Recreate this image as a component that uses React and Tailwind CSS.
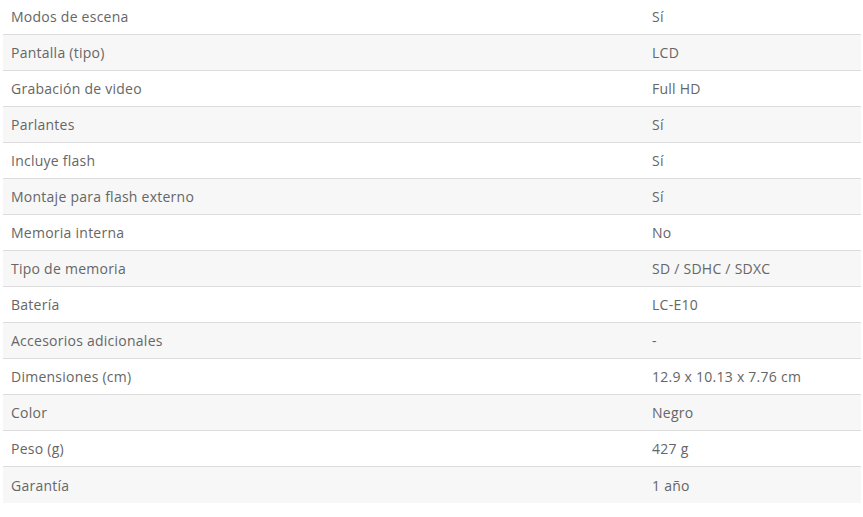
import React from 'react';

const specs = [
  ['Modos de escena', 'Sí'],
  ['Pantalla (tipo)', 'LCD'],
  ['Grabación de video', 'Full HD'],
  ['Parlantes', 'Sí'],
  ['Incluye flash', 'Sí'],
  ['Montaje para flash externo', 'Sí'],
  ['Memoria interna', 'No'],
  ['Tipo de memoria', 'SD / SDHC / SDXC'],
  ['Batería', 'LC-E10'],
  ['Accesorios adicionales', '-'],
  ['Dimensiones (cm)', '12.9 x 10.13 x 7.76 cm'],
  ['Color', 'Negro'],
  ['Peso (g)', '427 g'],
  ['Garantía', '1 año'],
];

const App = () => {
  return (
    <div className="w-[863px] h-[517px] bg-white overflow-hidden">
      <div
        className="ml-[3px] w-[858px] -mt-px text-[14px] tracking-[0.25px] text-[#666666]"
        style={{ fontFamily: '"Open Sans", "Liberation Sans", sans-serif' }}
      >
        {specs.map(([label, value], idx) => (
          <div
            key={label}
            className={`flex items-center h-[36px] ${
              idx < specs.length - 1 ? 'border-b border-[#dddddd]' : ''
            } ${idx % 2 === 1 ? 'bg-[#f7f7f7]' : 'bg-white'}`}
          >
            <div className="w-[641px] pl-[8px]">{label}</div>
            <div className="flex-1 pl-[8px]">{value}</div>
          </div>
        ))}
      </div>
    </div>
  );
};

export default App;
